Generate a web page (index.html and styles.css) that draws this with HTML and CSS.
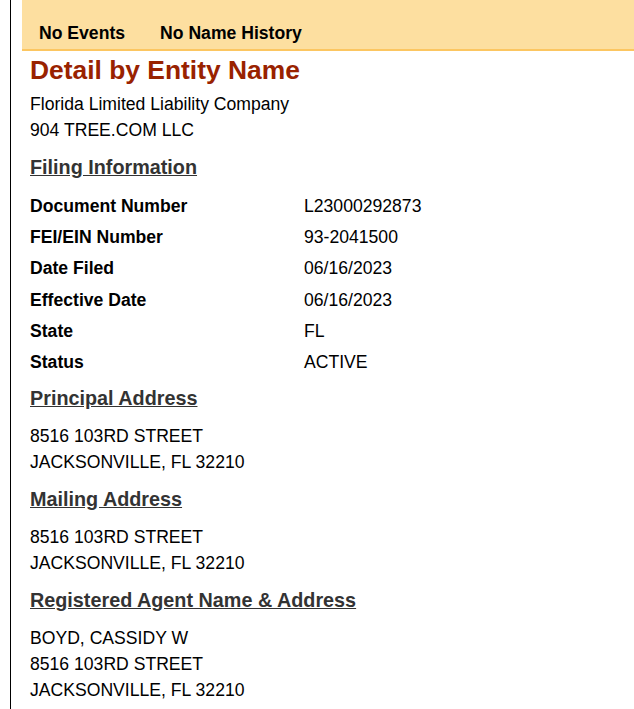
FILE: index.html
```html
<!DOCTYPE html>
<html>
<head>
<meta charset="utf-8">
<link rel="stylesheet" href="styles.css">
</head>
<body>
<div class="page">
  <div class="navbar">
    <span class="nav-item">No Events</span>
    <span class="nav-item">No Name History</span>
  </div>
  <div class="content">
    <h1 class="title">Detail by Entity Name</h1>
    <div class="block intro">
      <div>Florida Limited Liability Company</div>
      <div>904 TREE.COM LLC</div>
    </div>
    <h2 class="section">Filing Information</h2>
    <div class="filing">
      <div class="label">Document Number</div><div class="value">L23000292873</div>
      <div class="label">FEI/EIN Number</div><div class="value">93-2041500</div>
      <div class="label">Date Filed</div><div class="value">06/16/2023</div>
      <div class="label">Effective Date</div><div class="value">06/16/2023</div>
      <div class="label">State</div><div class="value">FL</div>
      <div class="label">Status</div><div class="value">ACTIVE</div>
    </div>
    <h2 class="section">Principal Address</h2>
    <div class="block">
      <div>8516 103RD STREET</div>
      <div>JACKSONVILLE, FL 32210</div>
    </div>
    <h2 class="section">Mailing Address</h2>
    <div class="block">
      <div>8516 103RD STREET</div>
      <div>JACKSONVILLE, FL 32210</div>
    </div>
    <h2 class="section">Registered Agent Name &amp; Address</h2>
    <div class="block">
      <div>BOYD, CASSIDY W</div>
      <div>8516 103RD STREET</div>
      <div>JACKSONVILLE, FL 32210</div>
    </div>
  </div>
</div>
</body>
</html>
```
FILE: styles.css
```css
html, body {
  margin: 0;
  padding: 0;
  background: #fff;
}
body {
  font-family: "Liberation Sans", Arial, sans-serif;
  font-size: 17.6px;
  color: #000;
}
.page {
  margin-left: 10px;
  border-left: 1px solid #000;
  padding-left: 11px;
  min-height: 709px;
  box-sizing: border-box;
}
.navbar {
  background: #fddfa0;
  border-bottom: 2px solid #fcc661;
  height: 49px;
  box-sizing: content-box;
  display: flex;
  align-items: flex-end;
  padding-left: 17px;
}
.nav-item {
  font-weight: bold;
  line-height: 20px;
  margin-bottom: 6px;
  margin-right: 35px;
}
.content {
  padding-left: 8px;
}
.title {
  margin: 4px 0 0;
  font-size: 26.4px;
  line-height: 30px;
  color: #992200;
  font-weight: bold;
}
.block {
  margin-top: 13px;
  line-height: 26px;
}
.intro {
  margin-top: 6px;
}
.section {
  margin: 12px 0 0;
  font-size: 19.8px;
  line-height: 24px;
  font-weight: bold;
  color: #333;
  text-decoration: underline;
}
.filing {
  margin-top: 12px;
  margin-bottom: -4px;
  display: grid;
  grid-template-columns: 274px auto;
  grid-auto-rows: 31.2px;
  align-items: center;
}
.label {
  font-weight: bold;
}
```
